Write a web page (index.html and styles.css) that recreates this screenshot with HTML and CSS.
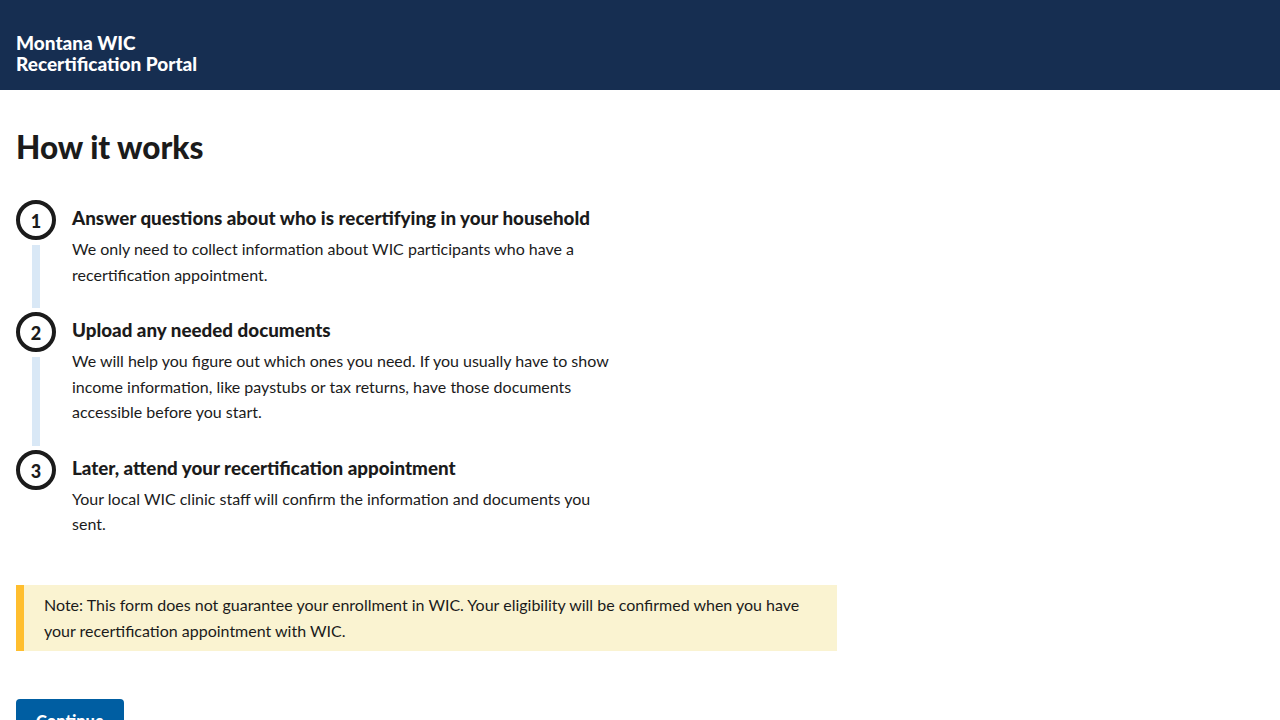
FILE: index.html
```html
<!DOCTYPE html>
<html lang="en">
<head>
<meta charset="utf-8">
<title>Montana WIC Recertification Portal</title>
<link rel="stylesheet" href="styles.css">
</head>
<body>
<header class="site-header">
  <div class="site-title">Montana WIC<br>Recertification Portal</div>
</header>
<main class="main">
  <h1 class="page-title">How it works</h1>
  <ol class="process-list">
    <li class="process-item">
      <div class="marker"><span class="circle">1</span><span class="connector"></span></div>
      <div class="content">
        <h2 class="item-heading">Answer questions about who is recertifying in your household</h2>
        <p class="item-text">We only need to collect information about WIC participants who have a recertification appointment.</p>
      </div>
    </li>
    <li class="process-item">
      <div class="marker"><span class="circle">2</span><span class="connector"></span></div>
      <div class="content">
        <h2 class="item-heading">Upload any needed documents</h2>
        <p class="item-text">We will help you figure out which ones you need. If you usually have to show income information, like paystubs or tax returns, have those documents accessible before you start.</p>
      </div>
    </li>
    <li class="process-item last">
      <div class="marker"><span class="circle">3</span></div>
      <div class="content">
        <h2 class="item-heading">Later, attend your recertification appointment</h2>
        <p class="item-text">Your local WIC clinic staff will confirm the information and documents you sent.</p>
      </div>
    </li>
  </ol>
  <div class="note">Note: This form does not guarantee your enrollment in WIC. Your eligibility will be confirmed when you have your recertification appointment with WIC.</div>
  <button class="button" type="button">Continue</button>
</main>
</body>
</html>
```

FILE: styles.css
```css
* { box-sizing: border-box; }
html, body { margin: 0; padding: 0; }
body {
  font-family: Lato, "Noto Sans", sans-serif;
  color: #1b1b1b;
  background: #fff;
}
.site-header {
  height: 90px;
  background: #162e51;
  display: flex;
  flex-direction: column;
  justify-content: flex-end;
  padding: 0 16px 16px;
}
.site-title {
  color: #fff;
  font-weight: 900;
  font-size: 19px;
  line-height: 21px;
}
.main {
  padding: 37px 16px 0;
}
.page-title {
  margin: 0;
  font-size: 31.5px;
  line-height: 40px;
  font-weight: 900;
}
.process-list {
  list-style: none;
  margin: 33px 0 0;
  padding: 0;
}
.process-item {
  display: flex;
  gap: 16px;
}
.marker {
  width: 40px;
  flex: none;
  display: flex;
  flex-direction: column;
  align-items: center;
}
.circle {
  width: 40px;
  height: 40px;
  flex: none;
  border: 4px solid #1b1b1b;
  border-radius: 50%;
  display: flex;
  align-items: center;
  justify-content: center;
  font-weight: 900;
  font-size: 18px;
  padding-top: 2px;
}
.connector {
  flex: 1;
  width: 8px;
  background: #d9e8f6;
  margin: 5px 0 4px;
}
.content {
  padding-top: 6px;
  padding-bottom: 25px;
  max-width: 552px;
}
.process-item.last .content { padding-bottom: 0; }
.item-heading {
  margin: 0;
  font-size: 18.8px;
  line-height: 24px;
  font-weight: 900;
}
.item-text {
  margin: 6px 0 0;
  font-size: 16px;
  line-height: 25.5px;
}
.note {
  margin-top: 48px;
  width: 821px;
  background: #faf3d1;
  border-left: 8px solid #ffbe2e;
  padding: 7px 24px 7px 20px;
  font-size: 16px;
  line-height: 26px;
}
.button {
  margin-top: 48px;
  background: #005ea2;
  color: #fff;
  border: 0;
  border-radius: 4px;
  font-family: inherit;
  font-weight: 900;
  font-size: 16.5px;
  line-height: 20px;
  padding: 12px 20px;
  cursor: pointer;
}
```
